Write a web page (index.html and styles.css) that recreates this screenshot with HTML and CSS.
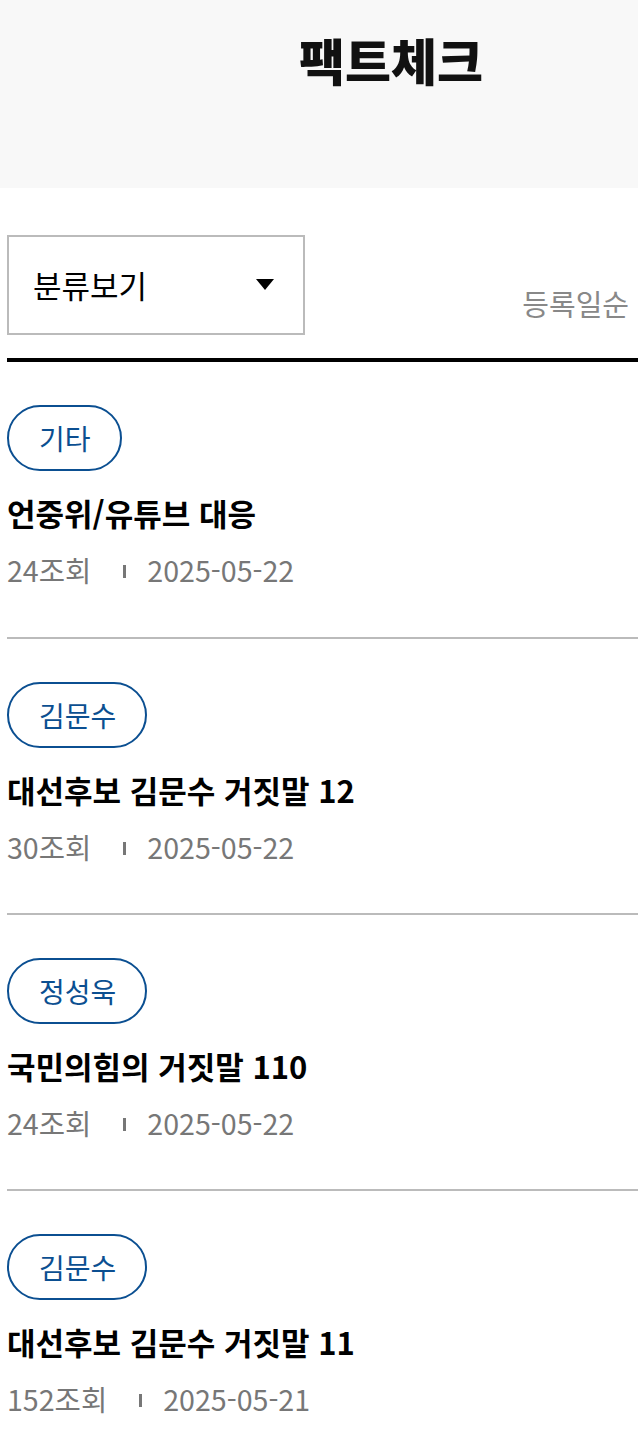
FILE: index.html
```html
<!DOCTYPE html>
<html lang="ko">
<head>
    <meta charset="UTF-8">
    <meta name="viewport" content="width=device-width, initial-scale=1.0">
    <title>팩트체크</title>
    <link rel="stylesheet" href="styles.css">
</head>
<body>
    <div class="page-head">
        <h1>팩트체크</h1>
    </div>

    <div class="board">
        <div class="board-top">
            <div class="category-select">
                <span>분류보기</span>
                <span class="arrow"></span>
            </div>
            <span class="sort">등록일순</span>
        </div>

        <ul class="post-list">
            <li class="post">
                <span class="tag">기타</span>
                <p class="post-title">언중위/유튜브 대응</p>
                <p class="post-meta"><span>24조회</span><span class="bar"></span><span>2025-05-22</span></p>
            </li>
            <li class="post">
                <span class="tag">김문수</span>
                <p class="post-title">대선후보 김문수 거짓말 12</p>
                <p class="post-meta"><span>30조회</span><span class="bar"></span><span>2025-05-22</span></p>
            </li>
            <li class="post">
                <span class="tag">정성욱</span>
                <p class="post-title">국민의힘의 거짓말 110</p>
                <p class="post-meta"><span>24조회</span><span class="bar"></span><span>2025-05-22</span></p>
            </li>
            <li class="post">
                <span class="tag">김문수</span>
                <p class="post-title">대선후보 김문수 거짓말 11</p>
                <p class="post-meta"><span>152조회</span><span class="bar"></span><span>2025-05-21</span></p>
            </li>
        </ul>
    </div>
</body>
</html>
```

FILE: styles.css
```css
body {
    margin: 0;
    font-family: "Noto Sans CJK KR", "Noto Sans", sans-serif;
    color: #000;
    background: #fff;
    overflow-x: hidden;
}

.page-head {
    background-color: #f8f8f8;
    height: 188px;
    padding-left: 299px;
    box-sizing: border-box;
}

.page-head h1 {
    margin: 0;
    padding-top: 26px;
    font-size: 50px;
    font-weight: 900;
    line-height: 66px;
    color: #111;
}

.board {
    margin-left: 7px;
}

.board-top {
    display: flex;
    justify-content: space-between;
    align-items: flex-end;
    margin-top: 47px;
    padding-bottom: 23px;
    border-bottom: 4px solid #000;
}

.category-select {
    width: 298px;
    height: 100px;
    box-sizing: border-box;
    border: 2px solid #bbb;
    display: flex;
    align-items: center;
    justify-content: space-between;
    padding: 0 29px 2px 24px;
    font-size: 31px;
}

.arrow {
    width: 0;
    height: 0;
    border-left: 9px solid transparent;
    border-right: 9px solid transparent;
    border-top: 11px solid #000;
}

.sort {
    font-size: 29px;
    color: #888;
    margin-right: 9px;
    line-height: 40px;
    margin-bottom: 12px;
}

.post-list {
    list-style: none;
    margin: 0;
    padding: 0;
}

.post {
    padding: 43px 0 0;
    height: 276px;
    box-sizing: border-box;
    border-bottom: 2px solid #bbb;
}

.post:first-child {
    height: 277px;
}

.tag {
    display: inline-block;
    height: 66px;
    line-height: 62px;
    box-sizing: border-box;
    padding: 0 29px 0 30px;
    border: 2px solid #0b4f91;
    border-radius: 33px;
    color: #0b4f91;
    font-size: 28px;
}

.post-title {
    margin: 20px 0 0;
    font-size: 31px;
    font-weight: 700;
    line-height: 44px;
}

.post-meta {
    margin: 15px 0 0;
    font-size: 28.6px;
    color: #777;
    line-height: 40px;
    display: flex;
    align-items: center;
}

.bar {
    width: 3px;
    height: 13px;
    background: #777;
    margin: 2px 21px 0 32px;
}
```
